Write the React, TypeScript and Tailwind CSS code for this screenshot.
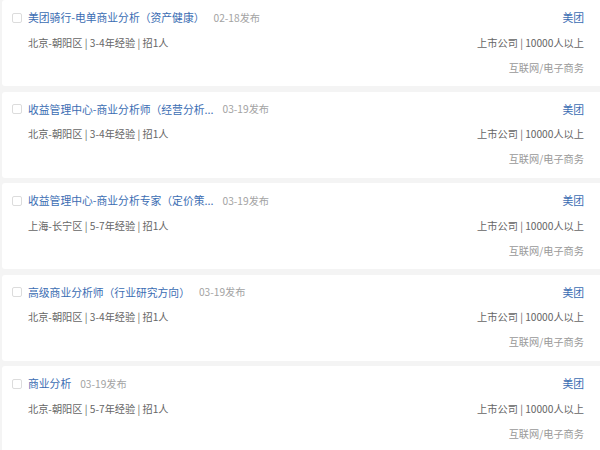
const jobs = [
  { title: '美团骑行-电单商业分析（资产健康）', date: '02-18发布', place: '北京-朝阳区 | 3-4年经验 | 招1人' },
  { title: '收益管理中心-商业分析师（经营分析...', date: '03-19发布', place: '北京-朝阳区 | 3-4年经验 | 招1人' },
  { title: '收益管理中心-商业分析专家（定价策...', date: '03-19发布', place: '上海-长宁区 | 5-7年经验 | 招1人' },
  { title: '高级商业分析师（行业研究方向）', date: '03-19发布', place: '北京-朝阳区 | 3-4年经验 | 招1人' },
  { title: '商业分析', date: '03-19发布', place: '北京-朝阳区 | 5-7年经验 | 招1人' },
]

function JobCard({ title, date, place }: { title: string; date: string; place: string }) {
  return (
    <div className="flex h-[86px] shrink-0 justify-between rounded-l-[3px] bg-white pl-[10px] pr-[16px] pt-[5px]">
      <div className="flex flex-col">
        <div className="flex h-[25px] items-center">
          <span className="h-[10px] w-[10px] rounded-[2px] border border-[#dcdcdc] bg-white" />
          <span className="ml-[6px] text-[10.8px] text-[#3b6db3]">{title}</span>
          <span className="ml-[9px] text-[10.2px] text-[#a3a3a3]">{date}</span>
        </div>
        <div className="flex h-[25px] items-center pl-[16px] text-[10.2px] text-[#666]">{place}</div>
      </div>
      <div className="flex flex-col items-end">
        <div className="flex h-[25px] items-center text-[10.8px] text-[#3b6db3]">美团</div>
        <div className="flex h-[25px] items-center text-[10.2px] text-[#666]">上市公司 | 10000人以上</div>
        <div className="flex h-[25px] items-center text-[10.2px] text-[#999]">互联网/电子商务</div>
      </div>
    </div>
  )
}

export default function App() {
  return (
    <div
      className="flex h-[450px] w-[600px] flex-col gap-[5.5px] overflow-hidden bg-[#f4f4f4] pl-[2px]"
      style={{ fontFamily: '"Noto Sans CJK SC", "Noto Sans", sans-serif' }}
    >
      {jobs.map((j) => (
        <JobCard key={j.title} {...j} />
      ))}
    </div>
  )
}
